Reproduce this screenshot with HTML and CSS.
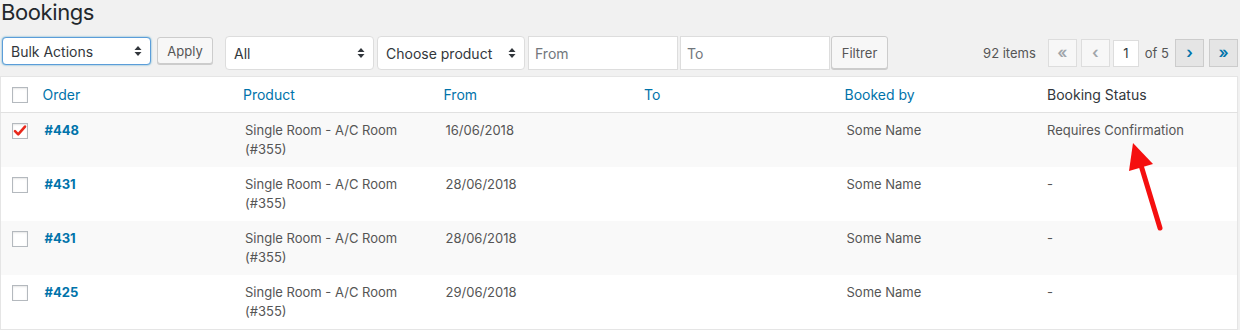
FILE: index.html
```html
<!DOCTYPE html>
<html lang="en">
  <head>
    <title>Bookings</title>
    <link rel="stylesheet" href="styles.css">
  </head>
  <body>
    <div class="wrap">
      <h1>Bookings</h1>

      <div class="tablenav">
        <div class="select select-bulk">
          <span>Bulk Actions</span>
          <svg class="updown" width="8" height="12" viewBox="0 0 8 12"><path d="M4 1 L7.5 5 L0.5 5 Z M4 11 L7.5 7 L0.5 7 Z" fill="#32373c"/></svg>
        </div>
        <button class="button btn-apply" type="button">Apply</button>

        <div class="select select-all">
          <span>All</span>
          <svg class="updown" width="8" height="12" viewBox="0 0 8 12"><path d="M4 1 L7.5 5 L0.5 5 Z M4 11 L7.5 7 L0.5 7 Z" fill="#32373c"/></svg>
        </div>
        <div class="select select-product">
          <span>Choose product</span>
          <svg class="updown" width="8" height="12" viewBox="0 0 8 12"><path d="M4 1 L7.5 5 L0.5 5 Z M4 11 L7.5 7 L0.5 7 Z" fill="#32373c"/></svg>
        </div>
        <input class="date-input date-from" type="text" placeholder="From">
        <input class="date-input date-to" type="text" placeholder="To">
        <button class="button btn-filter" type="button">Filtrer</button>

        <div class="pagination">
          <span class="num-items">92 items</span>
          <span class="page-btn disabled first">&laquo;</span>
          <span class="page-btn disabled prev">&lsaquo;</span>
          <input class="current-page" type="text" value="1">
          <span class="of-pages">of 5</span>
          <span class="page-btn next">&rsaquo;</span>
          <span class="page-btn last">&raquo;</span>
        </div>
      </div>

      <table class="bookings">
        <thead>
          <tr>
            <th class="col-cb"><span class="cb"></span></th>
            <th class="sortable"><a href="#">Order</a></th>
            <th class="sortable"><a href="#">Product</a></th>
            <th class="sortable"><a href="#">From</a></th>
            <th class="sortable"><a href="#">To</a></th>
            <th class="sortable"><a href="#">Booked by</a></th>
            <th class="plain">Booking Status</th>
          </tr>
        </thead>
        <tbody>
          <tr class="alt">
            <td class="col-cb">
              <span class="cb checked">
                <svg width="16" height="16" viewBox="0 0 16 16"><path d="M3 8.2 L6.2 11.4 L13 3.6" fill="none" stroke="#e8291c" stroke-width="2.6" stroke-linecap="round" stroke-linejoin="round"/></svg>
              </span>
            </td>
            <td><a class="order" href="#">#448</a></td>
            <td>Single Room - A/C Room<br>(#355)</td>
            <td>16/06/2018</td>
            <td></td>
            <td>Some Name</td>
            <td>Requires Confirmation</td>
          </tr>
          <tr>
            <td class="col-cb"><span class="cb"></span></td>
            <td><a class="order" href="#">#431</a></td>
            <td>Single Room - A/C Room<br>(#355)</td>
            <td>28/06/2018</td>
            <td></td>
            <td>Some Name</td>
            <td>-</td>
          </tr>
          <tr class="alt">
            <td class="col-cb"><span class="cb"></span></td>
            <td><a class="order" href="#">#431</a></td>
            <td>Single Room - A/C Room<br>(#355)</td>
            <td>28/06/2018</td>
            <td></td>
            <td>Some Name</td>
            <td>-</td>
          </tr>
          <tr>
            <td class="col-cb"><span class="cb"></span></td>
            <td><a class="order" href="#">#425</a></td>
            <td>Single Room - A/C Room<br>(#355)</td>
            <td>29/06/2018</td>
            <td></td>
            <td>Some Name</td>
            <td>-</td>
          </tr>
        </tbody>
      </table>

      <!-- annotation arrow pointing at the status -->
      <svg class="annotation" width="60" height="110" viewBox="0 0 60 110">
        <line x1="38" y1="96" x2="18" y2="30" stroke="#f50f0f" stroke-width="5" stroke-linecap="round"/>
        <path d="M11 11 L7 39 L31 32 Z" fill="#f50f0f"/>
      </svg>
    </div>
  </body>
</html>
```

FILE: styles.css
```css
*,
*:before,
*:after {
  box-sizing: border-box;
}

body {
  margin: 0;
  background-color: #f1f1f1;
  color: #444;
  font-family: Inter, "Noto Sans", sans-serif;
  font-size: 13px;
}

.wrap {
  position: relative;
  padding: 0 2px 0 0;
}

h1 {
  margin: 0;
  padding: 0 0 0 1px;
  font-size: 22px;
  font-weight: 400;
  line-height: 24px;
  letter-spacing: -0.4px;
  color: #23282d;
}

/* toolbar */

.tablenav {
  display: flex;
  align-items: flex-start;
  margin-top: 12px;
  height: 34px;
}

.select {
  display: flex;
  align-items: center;
  justify-content: space-between;
  background-color: #fff;
  border: 1px solid #ddd;
  border-radius: 4px;
  font-size: 14px;
  color: #32373c;
  padding: 0 8px;
  flex: none;
}

.select-bulk {
  margin: 1px 0 0 2px;
  width: 149px;
  height: 28px;
  border-color: #5b9dd9;
  box-shadow: 0 0 2px rgba(30, 140, 190, 0.8);
}

.select-all {
  margin-left: 12px;
  width: 149px;
  height: 34px;
}

.select-product {
  margin-left: 3px;
  width: 148px;
  height: 34px;
}

.updown {
  flex: none;
}

.button {
  flex: none;
  font-family: inherit;
  font-size: 13px;
  color: #555;
  background-color: #f7f7f7;
  border: 1px solid #ccc;
  border-radius: 3px;
  box-shadow: 0 1px 0 #ccc;
  cursor: pointer;
  padding: 0 8px;
}

.btn-apply {
  margin: 1px 0 0 6px;
  width: 56px;
  height: 27px;
}

.btn-filter {
  margin-left: 1px;
  width: 57px;
  height: 33px;
}

.date-input {
  flex: none;
  width: 150px;
  height: 34px;
  margin-left: 3px;
  padding: 0 6px;
  border: 1px solid #ddd;
  background-color: #fff;
  font-family: inherit;
  font-size: 14px;
  color: #32373c;
}

.date-input::placeholder {
  color: #72777c;
}

.date-to {
  margin-left: 2px;
}

.pagination {
  margin-left: auto;
  display: flex;
  align-items: center;
  height: 30px;
  margin-top: 2px;
  color: #555;
}

.num-items {
  margin-right: 12px;
  font-size: 13px;
}

.page-btn {
  display: flex;
  align-items: center;
  justify-content: center;
  width: 29px;
  height: 28px;
  border: 1px solid #ccc;
  background-color: #e5e5e5;
  color: #0073aa;
  font-size: 16px;
  font-weight: 600;
  line-height: 1;
  padding-bottom: 2px;
}

.page-btn.disabled {
  background-color: #f7f7f7;
  border-color: #ddd;
  color: #a0a5aa;
}

.page-btn.prev {
  margin-left: 4px;
}

.page-btn.last {
  margin-left: 5px;
}

.current-page {
  margin-left: 3px;
  width: 26px;
  height: 27px;
  border: 1px solid #ddd;
  background-color: #fff;
  font-family: inherit;
  font-size: 13px;
  color: #32373c;
  text-align: center;
  padding: 0;
}

.of-pages {
  margin: 0 6px 0 6px;
  font-size: 13px;
}

/* table */

.bookings {
  margin-top: 6px;
  width: 100%;
  border-collapse: collapse;
  table-layout: fixed;
  background-color: #fff;
  border: 1px solid #e5e5e5;
  box-shadow: 0 1px 1px rgba(0, 0, 0, 0.04);
}

.bookings th {
  text-align: left;
  font-weight: 400;
  font-size: 14px;
  height: 36px;
  border-bottom: 1px solid #e1e1e1;
  padding: 0;
}

.bookings th.sortable a {
  display: block;
  padding: 0 8px;
  color: #0073aa;
  text-decoration: none;
}

.bookings th.plain {
  padding: 0 10px;
  color: #32373c;
}

.bookings .col-cb {
  width: 34px;
  padding: 0 0 0 11px;
}

.bookings td {
  vertical-align: top;
  padding: 8px 10px;
  height: 54px;
  line-height: 19px;
  color: #555;
}

.bookings td.col-cb {
  padding: 10px 0 0 11px;
}

.bookings tr.alt td {
  background-color: #f9f9f9;
}

.order {
  color: #0073aa;
  font-weight: 700;
  text-decoration: none;
}

.cb {
  display: block;
  width: 16px;
  height: 16px;
  border: 1px solid #b4b9be;
  background-color: #fff;
  box-shadow: inset 0 1px 2px rgba(0, 0, 0, 0.1);
}

.cb svg {
  display: block;
  margin: -1px 0 0 -1px;
}

.annotation {
  position: absolute;
  left: 1122px;
  top: 132px;
}
```
